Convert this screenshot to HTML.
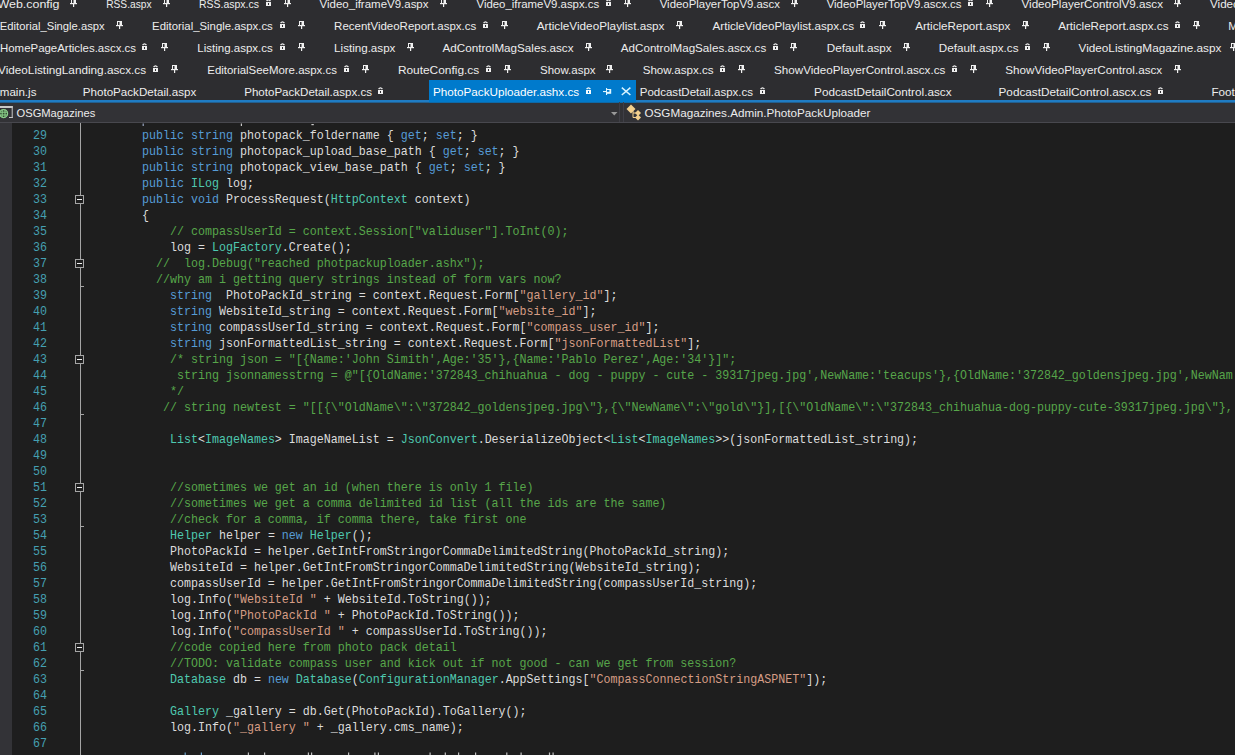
<!DOCTYPE html>
<html><head><meta charset="utf-8">
<style>
html,body{margin:0;padding:0;width:1235px;height:755px;overflow:hidden;background:#2d2d30;}
svg{display:block;}
.tabs text, .nav text{font-family:"Liberation Sans",sans-serif;font-size:11.5px;}
.code text{font-family:"Liberation Mono",monospace;font-size:11.667px;fill:#dcdcdc;}
.code .k{fill:#569cd6;}
.code .t{fill:#4ec9b0;}
.code .s{fill:#d69d85;}
.code .c{fill:#57a64a;}
.code .ln{fill:#45a0b2;}
</style></head>
<body>
<svg width="1235" height="755" viewBox="0 0 1235 755">
<rect x="0" y="0" width="1235" height="755" fill="#2d2d30"/>
<g class="tabs">
<text x="-2.5" y="8" textLength="62.0" lengthAdjust="spacingAndGlyphs" fill="#ececec">Web.config</text>
<g transform="translate(70,-1)" fill="#f0f0f0"><rect x="1" y="0" width="5" height="1"/><rect x="1" y="0" width="1" height="4"/><rect x="3.5" y="0" width="2.5" height="4"/><rect x="0" y="4" width="7" height="1.2"/><rect x="3" y="5" width="1.2" height="3"/></g>
<text x="106.2" y="8" textLength="45.4" lengthAdjust="spacingAndGlyphs" fill="#ececec">RSS.aspx</text>
<g transform="translate(163,-1)" fill="#f0f0f0"><rect x="1" y="0" width="5" height="1"/><rect x="1" y="0" width="1" height="4"/><rect x="3.5" y="0" width="2.5" height="4"/><rect x="0" y="4" width="7" height="1.2"/><rect x="3" y="5" width="1.2" height="3"/></g>
<text x="199.0" y="8" textLength="60.0" lengthAdjust="spacingAndGlyphs" fill="#ececec">RSS.aspx.cs</text>
<g transform="translate(266,-1)"><path d="M0.6 2.2 Q2.5 -0.4 4.4 2.2" stroke="#f0f0f0" stroke-width="1.3" fill="none"/><rect x="0" y="3" width="5" height="4" fill="#f0f0f0"/><rect x="2" y="4" width="1" height="2" fill="#2d2d30"/></g>
<g transform="translate(284,-1)" fill="#f0f0f0"><rect x="1" y="0" width="5" height="1"/><rect x="1" y="0" width="1" height="4"/><rect x="3.5" y="0" width="2.5" height="4"/><rect x="0" y="4" width="7" height="1.2"/><rect x="3" y="5" width="1.2" height="3"/></g>
<text x="319.6" y="8" textLength="108.9" lengthAdjust="spacingAndGlyphs" fill="#ececec">Video_iframeV9.aspx</text>
<g transform="translate(440,-1)" fill="#f0f0f0"><rect x="1" y="0" width="5" height="1"/><rect x="1" y="0" width="1" height="4"/><rect x="3.5" y="0" width="2.5" height="4"/><rect x="0" y="4" width="7" height="1.2"/><rect x="3" y="5" width="1.2" height="3"/></g>
<text x="476.5" y="8" textLength="122.7" lengthAdjust="spacingAndGlyphs" fill="#ececec">Video_iframeV9.aspx.cs</text>
<g transform="translate(606,-1)"><path d="M0.6 2.2 Q2.5 -0.4 4.4 2.2" stroke="#f0f0f0" stroke-width="1.3" fill="none"/><rect x="0" y="3" width="5" height="4" fill="#f0f0f0"/><rect x="2" y="4" width="1" height="2" fill="#2d2d30"/></g>
<g transform="translate(624,-1)" fill="#f0f0f0"><rect x="1" y="0" width="5" height="1"/><rect x="1" y="0" width="1" height="4"/><rect x="3.5" y="0" width="2.5" height="4"/><rect x="0" y="4" width="7" height="1.2"/><rect x="3" y="5" width="1.2" height="3"/></g>
<text x="659.7" y="8" textLength="120.3" lengthAdjust="spacingAndGlyphs" fill="#ececec">VideoPlayerTopV9.ascx</text>
<g transform="translate(791,-1)" fill="#f0f0f0"><rect x="1" y="0" width="5" height="1"/><rect x="1" y="0" width="1" height="4"/><rect x="3.5" y="0" width="2.5" height="4"/><rect x="0" y="4" width="7" height="1.2"/><rect x="3" y="5" width="1.2" height="3"/></g>
<text x="826.7" y="8" textLength="134.8" lengthAdjust="spacingAndGlyphs" fill="#ececec">VideoPlayerTopV9.ascx.cs</text>
<g transform="translate(968,-1)"><path d="M0.6 2.2 Q2.5 -0.4 4.4 2.2" stroke="#f0f0f0" stroke-width="1.3" fill="none"/><rect x="0" y="3" width="5" height="4" fill="#f0f0f0"/><rect x="2" y="4" width="1" height="2" fill="#2d2d30"/></g>
<g transform="translate(986,-1)" fill="#f0f0f0"><rect x="1" y="0" width="5" height="1"/><rect x="1" y="0" width="1" height="4"/><rect x="3.5" y="0" width="2.5" height="4"/><rect x="0" y="4" width="7" height="1.2"/><rect x="3" y="5" width="1.2" height="3"/></g>
<text x="1021.5" y="8" textLength="141.5" lengthAdjust="spacingAndGlyphs" fill="#ececec">VideoPlayerControlV9.ascx</text>
<g transform="translate(1174,-1)" fill="#f0f0f0"><rect x="1" y="0" width="5" height="1"/><rect x="1" y="0" width="1" height="4"/><rect x="3.5" y="0" width="2.5" height="4"/><rect x="0" y="4" width="7" height="1.2"/><rect x="3" y="5" width="1.2" height="3"/></g>
<text x="1210.0" y="8" textLength="156.3" lengthAdjust="spacingAndGlyphs" fill="#ececec">VideoPlayerControlV9.ascx.cs</text>
<text x="-0.2" y="30" textLength="104.9" lengthAdjust="spacingAndGlyphs" fill="#ececec">Editorial_Single.aspx</text>
<g transform="translate(116,21)" fill="#f0f0f0"><rect x="1" y="0" width="5" height="1"/><rect x="1" y="0" width="1" height="4"/><rect x="3.5" y="0" width="2.5" height="4"/><rect x="0" y="4" width="7" height="1.2"/><rect x="3" y="5" width="1.2" height="3"/></g>
<text x="152.1" y="30" textLength="120.7" lengthAdjust="spacingAndGlyphs" fill="#ececec">Editorial_Single.aspx.cs</text>
<g transform="translate(280,21)"><path d="M0.6 2.2 Q2.5 -0.4 4.4 2.2" stroke="#f0f0f0" stroke-width="1.3" fill="none"/><rect x="0" y="3" width="5" height="4" fill="#f0f0f0"/><rect x="2" y="4" width="1" height="2" fill="#2d2d30"/></g>
<g transform="translate(298,21)" fill="#f0f0f0"><rect x="1" y="0" width="5" height="1"/><rect x="1" y="0" width="1" height="4"/><rect x="3.5" y="0" width="2.5" height="4"/><rect x="0" y="4" width="7" height="1.2"/><rect x="3" y="5" width="1.2" height="3"/></g>
<text x="334.1" y="30" textLength="142.1" lengthAdjust="spacingAndGlyphs" fill="#ececec">RecentVideoReport.aspx.cs</text>
<g transform="translate(483,21)"><path d="M0.6 2.2 Q2.5 -0.4 4.4 2.2" stroke="#f0f0f0" stroke-width="1.3" fill="none"/><rect x="0" y="3" width="5" height="4" fill="#f0f0f0"/><rect x="2" y="4" width="1" height="2" fill="#2d2d30"/></g>
<g transform="translate(501,21)" fill="#f0f0f0"><rect x="1" y="0" width="5" height="1"/><rect x="1" y="0" width="1" height="4"/><rect x="3.5" y="0" width="2.5" height="4"/><rect x="0" y="4" width="7" height="1.2"/><rect x="3" y="5" width="1.2" height="3"/></g>
<text x="536.7" y="30" textLength="127.8" lengthAdjust="spacingAndGlyphs" fill="#ececec">ArticleVideoPlaylist.aspx</text>
<g transform="translate(676,21)" fill="#f0f0f0"><rect x="1" y="0" width="5" height="1"/><rect x="1" y="0" width="1" height="4"/><rect x="3.5" y="0" width="2.5" height="4"/><rect x="0" y="4" width="7" height="1.2"/><rect x="3" y="5" width="1.2" height="3"/></g>
<text x="712.5" y="30" textLength="141.5" lengthAdjust="spacingAndGlyphs" fill="#ececec">ArticleVideoPlaylist.aspx.cs</text>
<g transform="translate(860,21)"><path d="M0.6 2.2 Q2.5 -0.4 4.4 2.2" stroke="#f0f0f0" stroke-width="1.3" fill="none"/><rect x="0" y="3" width="5" height="4" fill="#f0f0f0"/><rect x="2" y="4" width="1" height="2" fill="#2d2d30"/></g>
<g transform="translate(879,21)" fill="#f0f0f0"><rect x="1" y="0" width="5" height="1"/><rect x="1" y="0" width="1" height="4"/><rect x="3.5" y="0" width="2.5" height="4"/><rect x="0" y="4" width="7" height="1.2"/><rect x="3" y="5" width="1.2" height="3"/></g>
<text x="915.2" y="30" textLength="95.1" lengthAdjust="spacingAndGlyphs" fill="#ececec">ArticleReport.aspx</text>
<g transform="translate(1022,21)" fill="#f0f0f0"><rect x="1" y="0" width="5" height="1"/><rect x="1" y="0" width="1" height="4"/><rect x="3.5" y="0" width="2.5" height="4"/><rect x="0" y="4" width="7" height="1.2"/><rect x="3" y="5" width="1.2" height="3"/></g>
<text x="1058.2" y="30" textLength="110.3" lengthAdjust="spacingAndGlyphs" fill="#ececec">ArticleReport.aspx.cs</text>
<g transform="translate(1175,21)"><path d="M0.6 2.2 Q2.5 -0.4 4.4 2.2" stroke="#f0f0f0" stroke-width="1.3" fill="none"/><rect x="0" y="3" width="5" height="4" fill="#f0f0f0"/><rect x="2" y="4" width="1" height="2" fill="#2d2d30"/></g>
<g transform="translate(1193,21)" fill="#f0f0f0"><rect x="1" y="0" width="5" height="1"/><rect x="1" y="0" width="1" height="4"/><rect x="3.5" y="0" width="2.5" height="4"/><rect x="0" y="4" width="7" height="1.2"/><rect x="3" y="5" width="1.2" height="3"/></g>
<text x="1228.2" y="30" textLength="111.9" lengthAdjust="spacingAndGlyphs" fill="#ececec">MagazineListing.aspx</text>
<text x="0.0" y="52" textLength="136.0" lengthAdjust="spacingAndGlyphs" fill="#ececec">HomePageArticles.ascx.cs</text>
<g transform="translate(142,43)"><path d="M0.6 2.2 Q2.5 -0.4 4.4 2.2" stroke="#f0f0f0" stroke-width="1.3" fill="none"/><rect x="0" y="3" width="5" height="4" fill="#f0f0f0"/><rect x="2" y="4" width="1" height="2" fill="#2d2d30"/></g>
<g transform="translate(161,43)" fill="#f0f0f0"><rect x="1" y="0" width="5" height="1"/><rect x="1" y="0" width="1" height="4"/><rect x="3.5" y="0" width="2.5" height="4"/><rect x="0" y="4" width="7" height="1.2"/><rect x="3" y="5" width="1.2" height="3"/></g>
<text x="197.3" y="52" textLength="75.5" lengthAdjust="spacingAndGlyphs" fill="#ececec">Listing.aspx.cs</text>
<g transform="translate(280,43)"><path d="M0.6 2.2 Q2.5 -0.4 4.4 2.2" stroke="#f0f0f0" stroke-width="1.3" fill="none"/><rect x="0" y="3" width="5" height="4" fill="#f0f0f0"/><rect x="2" y="4" width="1" height="2" fill="#2d2d30"/></g>
<g transform="translate(298,43)" fill="#f0f0f0"><rect x="1" y="0" width="5" height="1"/><rect x="1" y="0" width="1" height="4"/><rect x="3.5" y="0" width="2.5" height="4"/><rect x="0" y="4" width="7" height="1.2"/><rect x="3" y="5" width="1.2" height="3"/></g>
<text x="334.1" y="52" textLength="61.3" lengthAdjust="spacingAndGlyphs" fill="#ececec">Listing.aspx</text>
<g transform="translate(407,43)" fill="#f0f0f0"><rect x="1" y="0" width="5" height="1"/><rect x="1" y="0" width="1" height="4"/><rect x="3.5" y="0" width="2.5" height="4"/><rect x="0" y="4" width="7" height="1.2"/><rect x="3" y="5" width="1.2" height="3"/></g>
<text x="442.5" y="52" textLength="131.0" lengthAdjust="spacingAndGlyphs" fill="#ececec">AdControlMagSales.ascx</text>
<g transform="translate(585,43)" fill="#f0f0f0"><rect x="1" y="0" width="5" height="1"/><rect x="1" y="0" width="1" height="4"/><rect x="3.5" y="0" width="2.5" height="4"/><rect x="0" y="4" width="7" height="1.2"/><rect x="3" y="5" width="1.2" height="3"/></g>
<text x="620.8" y="52" textLength="145.4" lengthAdjust="spacingAndGlyphs" fill="#ececec">AdControlMagSales.ascx.cs</text>
<g transform="translate(773,43)"><path d="M0.6 2.2 Q2.5 -0.4 4.4 2.2" stroke="#f0f0f0" stroke-width="1.3" fill="none"/><rect x="0" y="3" width="5" height="4" fill="#f0f0f0"/><rect x="2" y="4" width="1" height="2" fill="#2d2d30"/></g>
<g transform="translate(790,43)" fill="#f0f0f0"><rect x="1" y="0" width="5" height="1"/><rect x="1" y="0" width="1" height="4"/><rect x="3.5" y="0" width="2.5" height="4"/><rect x="0" y="4" width="7" height="1.2"/><rect x="3" y="5" width="1.2" height="3"/></g>
<text x="826.7" y="52" textLength="65.0" lengthAdjust="spacingAndGlyphs" fill="#ececec">Default.aspx</text>
<g transform="translate(903,43)" fill="#f0f0f0"><rect x="1" y="0" width="5" height="1"/><rect x="1" y="0" width="1" height="4"/><rect x="3.5" y="0" width="2.5" height="4"/><rect x="0" y="4" width="7" height="1.2"/><rect x="3" y="5" width="1.2" height="3"/></g>
<text x="938.8" y="52" textLength="79.7" lengthAdjust="spacingAndGlyphs" fill="#ececec">Default.aspx.cs</text>
<g transform="translate(1025,43)"><path d="M0.6 2.2 Q2.5 -0.4 4.4 2.2" stroke="#f0f0f0" stroke-width="1.3" fill="none"/><rect x="0" y="3" width="5" height="4" fill="#f0f0f0"/><rect x="2" y="4" width="1" height="2" fill="#2d2d30"/></g>
<g transform="translate(1043,43)" fill="#f0f0f0"><rect x="1" y="0" width="5" height="1"/><rect x="1" y="0" width="1" height="4"/><rect x="3.5" y="0" width="2.5" height="4"/><rect x="0" y="4" width="7" height="1.2"/><rect x="3" y="5" width="1.2" height="3"/></g>
<text x="1078.5" y="52" textLength="142.9" lengthAdjust="spacingAndGlyphs" fill="#ececec">VideoListingMagazine.aspx</text>
<g transform="translate(1230,43)" fill="#f0f0f0"><rect x="1" y="0" width="5" height="1"/><rect x="1" y="0" width="1" height="4"/><rect x="3.5" y="0" width="2.5" height="4"/><rect x="0" y="4" width="7" height="1.2"/><rect x="3" y="5" width="1.2" height="3"/></g>
<text x="-2.0" y="74" textLength="148.1" lengthAdjust="spacingAndGlyphs" fill="#ececec">VideoListingLanding.ascx.cs</text>
<g transform="translate(153,65)"><path d="M0.6 2.2 Q2.5 -0.4 4.4 2.2" stroke="#f0f0f0" stroke-width="1.3" fill="none"/><rect x="0" y="3" width="5" height="4" fill="#f0f0f0"/><rect x="2" y="4" width="1" height="2" fill="#2d2d30"/></g>
<g transform="translate(171,65)" fill="#f0f0f0"><rect x="1" y="0" width="5" height="1"/><rect x="1" y="0" width="1" height="4"/><rect x="3.5" y="0" width="2.5" height="4"/><rect x="0" y="4" width="7" height="1.2"/><rect x="3" y="5" width="1.2" height="3"/></g>
<text x="207.3" y="74" textLength="129.6" lengthAdjust="spacingAndGlyphs" fill="#ececec">EditorialSeeMore.aspx.cs</text>
<g transform="translate(344,65)"><path d="M0.6 2.2 Q2.5 -0.4 4.4 2.2" stroke="#f0f0f0" stroke-width="1.3" fill="none"/><rect x="0" y="3" width="5" height="4" fill="#f0f0f0"/><rect x="2" y="4" width="1" height="2" fill="#2d2d30"/></g>
<g transform="translate(362,65)" fill="#f0f0f0"><rect x="1" y="0" width="5" height="1"/><rect x="1" y="0" width="1" height="4"/><rect x="3.5" y="0" width="2.5" height="4"/><rect x="0" y="4" width="7" height="1.2"/><rect x="3" y="5" width="1.2" height="3"/></g>
<text x="397.9" y="74" textLength="81.3" lengthAdjust="spacingAndGlyphs" fill="#ececec">RouteConfig.cs</text>
<g transform="translate(486,65)"><path d="M0.6 2.2 Q2.5 -0.4 4.4 2.2" stroke="#f0f0f0" stroke-width="1.3" fill="none"/><rect x="0" y="3" width="5" height="4" fill="#f0f0f0"/><rect x="2" y="4" width="1" height="2" fill="#2d2d30"/></g>
<g transform="translate(504,65)" fill="#f0f0f0"><rect x="1" y="0" width="5" height="1"/><rect x="1" y="0" width="1" height="4"/><rect x="3.5" y="0" width="2.5" height="4"/><rect x="0" y="4" width="7" height="1.2"/><rect x="3" y="5" width="1.2" height="3"/></g>
<text x="540.0" y="74" textLength="55.5" lengthAdjust="spacingAndGlyphs" fill="#ececec">Show.aspx</text>
<g transform="translate(606,65)" fill="#f0f0f0"><rect x="1" y="0" width="5" height="1"/><rect x="1" y="0" width="1" height="4"/><rect x="3.5" y="0" width="2.5" height="4"/><rect x="0" y="4" width="7" height="1.2"/><rect x="3" y="5" width="1.2" height="3"/></g>
<text x="642.7" y="74" textLength="70.8" lengthAdjust="spacingAndGlyphs" fill="#ececec">Show.aspx.cs</text>
<g transform="translate(720,65)"><path d="M0.6 2.2 Q2.5 -0.4 4.4 2.2" stroke="#f0f0f0" stroke-width="1.3" fill="none"/><rect x="0" y="3" width="5" height="4" fill="#f0f0f0"/><rect x="2" y="4" width="1" height="2" fill="#2d2d30"/></g>
<g transform="translate(738,65)" fill="#f0f0f0"><rect x="1" y="0" width="5" height="1"/><rect x="1" y="0" width="1" height="4"/><rect x="3.5" y="0" width="2.5" height="4"/><rect x="0" y="4" width="7" height="1.2"/><rect x="3" y="5" width="1.2" height="3"/></g>
<text x="774.0" y="74" textLength="171.3" lengthAdjust="spacingAndGlyphs" fill="#ececec">ShowVideoPlayerControl.ascx.cs</text>
<g transform="translate(952,65)"><path d="M0.6 2.2 Q2.5 -0.4 4.4 2.2" stroke="#f0f0f0" stroke-width="1.3" fill="none"/><rect x="0" y="3" width="5" height="4" fill="#f0f0f0"/><rect x="2" y="4" width="1" height="2" fill="#2d2d30"/></g>
<g transform="translate(970,65)" fill="#f0f0f0"><rect x="1" y="0" width="5" height="1"/><rect x="1" y="0" width="1" height="4"/><rect x="3.5" y="0" width="2.5" height="4"/><rect x="0" y="4" width="7" height="1.2"/><rect x="3" y="5" width="1.2" height="3"/></g>
<text x="1005.3" y="74" textLength="156.9" lengthAdjust="spacingAndGlyphs" fill="#ececec">ShowVideoPlayerControl.ascx</text>
<g transform="translate(1174,65)" fill="#f0f0f0"><rect x="1" y="0" width="5" height="1"/><rect x="1" y="0" width="1" height="4"/><rect x="3.5" y="0" width="2.5" height="4"/><rect x="0" y="4" width="7" height="1.2"/><rect x="3" y="5" width="1.2" height="3"/></g>
<text x="-0.2" y="96" textLength="36.6" lengthAdjust="spacingAndGlyphs" fill="#ececec">main.js</text>
<text x="82.8" y="96" textLength="113.5" lengthAdjust="spacingAndGlyphs" fill="#ececec">PhotoPackDetail.aspx</text>
<text x="244.2" y="96" textLength="127.8" lengthAdjust="spacingAndGlyphs" fill="#ececec">PhotoPackDetail.aspx.cs</text>
<g transform="translate(378,87)"><path d="M0.6 2.2 Q2.5 -0.4 4.4 2.2" stroke="#f0f0f0" stroke-width="1.3" fill="none"/><rect x="0" y="3" width="5" height="4" fill="#f0f0f0"/><rect x="2" y="4" width="1" height="2" fill="#2d2d30"/></g>
<text x="639.7" y="96" textLength="113.4" lengthAdjust="spacingAndGlyphs" fill="#ececec">PodcastDetail.aspx.cs</text>
<g transform="translate(760,87)"><path d="M0.6 2.2 Q2.5 -0.4 4.4 2.2" stroke="#f0f0f0" stroke-width="1.3" fill="none"/><rect x="0" y="3" width="5" height="4" fill="#f0f0f0"/><rect x="2" y="4" width="1" height="2" fill="#2d2d30"/></g>
<text x="814.1" y="96" textLength="137.4" lengthAdjust="spacingAndGlyphs" fill="#ececec">PodcastDetailControl.ascx</text>
<text x="998.5" y="96" textLength="152.9" lengthAdjust="spacingAndGlyphs" fill="#ececec">PodcastDetailControl.ascx.cs</text>
<g transform="translate(1158,87)"><path d="M0.6 2.2 Q2.5 -0.4 4.4 2.2" stroke="#f0f0f0" stroke-width="1.3" fill="none"/><rect x="0" y="3" width="5" height="4" fill="#f0f0f0"/><rect x="2" y="4" width="1" height="2" fill="#2d2d30"/></g>
<text x="1211.4" y="96" textLength="60.2" lengthAdjust="spacingAndGlyphs" fill="#ececec">Footer.ascx</text>
<rect x="0" y="100" width="1235" height="2.8" fill="#1f7cc4"/>
<rect x="429" y="80" width="207" height="22.8" fill="#007acc"/>
<text x="433.0" y="96" textLength="146.1" lengthAdjust="spacingAndGlyphs" fill="#ffffff">PhotoPackUploader.ashx.cs</text>
<g transform="translate(586,87)"><path d="M0.6 2.2 Q2.5 -0.4 4.4 2.2" stroke="#f4fbff" stroke-width="1.3" fill="none"/><rect x="0" y="3" width="5" height="4" fill="#f4fbff"/><rect x="2" y="4" width="1" height="2" fill="#007acc"/></g>
<g transform="translate(603,88)" fill="#e0f6ff"><rect x="0" y="3" width="3" height="1.1"/><rect x="3" y="0" width="1.1" height="7"/><rect x="4" y="1" width="4.2" height="4.8"/><rect x="4" y="2" width="2.4" height="1.8" fill="#007acc"/></g>
<path d="M621.8 87.6 L630.4 95 M630.4 87.6 L621.8 95" stroke="#d8f4ff" stroke-width="1.5"/>
</g>
<g class="nav">

<rect x="0" y="102.8" width="1235" height="19.2" fill="#323236"/>
<rect x="0" y="122" width="1235" height="1.5" fill="#48484e"/>
<g>
 <rect x="-2" y="106" width="14.7" height="2" fill="#c8c8c8"/>
 <rect x="11.7" y="106" width="1" height="12" fill="#c8c8c8"/>
 <rect x="9" y="117" width="3.7" height="1" fill="#c8c8c8"/>
 <circle cx="3.6" cy="113.6" r="4" fill="#2f4a2f" stroke="#8ccf8c" stroke-width="1.2"/>
 <path d="M-0.5 112.2 H7.7 M-0.5 115 H7.7 M2.2 109.5 V117.7 M5 109.5 V117.7" stroke="#8ccf8c" stroke-width="1"/>
</g>
<path d="M611 112 L617.5 112 L614.25 115.5 Z" fill="#999999"/>
<rect x="619" y="102" width="1" height="20" fill="#3f3f46"/>
<rect x="623" y="102" width="1" height="20" fill="#3f3f46"/>
<g fill="#f2cf8c">
 <path d="M631 104.5 L635.5 109 L631 113.5 L626.5 109 Z"/>
 <path d="M638 110 L641 113 L638 116 L635 113 Z"/>
 <path d="M638 114.5 L641 117.5 L638 120.5 L635 117.5 Z"/>
</g>
<path d="M633 111 V117.5 H636 M633 113 H636" stroke="#f2cf8c" stroke-width="1" fill="none"/>
<text x="16.5" y="117" textLength="78.8" lengthAdjust="spacingAndGlyphs" fill="#ececec">OSGMagazines</text>
<text x="644.5" y="117" textLength="225.9" lengthAdjust="spacingAndGlyphs" fill="#ececec">OSGMagazines.Admin.PhotoPackUploader</text>
</g>
<rect x="0" y="123" width="1235" height="632" fill="#1e1e1e"/>
<rect x="0" y="123" width="12" height="632" fill="#333337"/>
<svg x="0" y="123" width="1235" height="632" viewBox="0 123 1235 632">
<g class="code">
<text transform="translate(0,139) scale(1,1.08) translate(0,-139)" x="142.0" y="139" xml:space="preserve"><tspan class="k">public</tspan><tspan class="p"> </tspan><tspan class="k">string</tspan><tspan class="p"> photopack_foldername { </tspan><tspan class="k">get</tspan><tspan class="p">; </tspan><tspan class="k">set</tspan><tspan class="p">; }</tspan></text>
<text class="ln" transform="translate(0,139) scale(1,1.08) translate(0,-139)" x="33.0" y="139">29</text>
<text transform="translate(0,155) scale(1,1.08) translate(0,-155)" x="142.0" y="155" xml:space="preserve"><tspan class="k">public</tspan><tspan class="p"> </tspan><tspan class="k">string</tspan><tspan class="p"> photopack_upload_base_path { </tspan><tspan class="k">get</tspan><tspan class="p">; </tspan><tspan class="k">set</tspan><tspan class="p">; }</tspan></text>
<text class="ln" transform="translate(0,155) scale(1,1.08) translate(0,-155)" x="33.0" y="155">30</text>
<text transform="translate(0,171) scale(1,1.08) translate(0,-171)" x="142.0" y="171" xml:space="preserve"><tspan class="k">public</tspan><tspan class="p"> </tspan><tspan class="k">string</tspan><tspan class="p"> photopack_view_base_path { </tspan><tspan class="k">get</tspan><tspan class="p">; </tspan><tspan class="k">set</tspan><tspan class="p">; }</tspan></text>
<text class="ln" transform="translate(0,171) scale(1,1.08) translate(0,-171)" x="33.0" y="171">31</text>
<text transform="translate(0,187) scale(1,1.08) translate(0,-187)" x="142.0" y="187" xml:space="preserve"><tspan class="k">public</tspan><tspan class="p"> </tspan><tspan class="t">ILog</tspan><tspan class="p"> log;</tspan></text>
<text class="ln" transform="translate(0,187) scale(1,1.08) translate(0,-187)" x="33.0" y="187">32</text>
<text transform="translate(0,203) scale(1,1.08) translate(0,-203)" x="142.0" y="203" xml:space="preserve"><tspan class="k">public</tspan><tspan class="p"> </tspan><tspan class="k">void</tspan><tspan class="p"> ProcessRequest(</tspan><tspan class="t">HttpContext</tspan><tspan class="p"> context)</tspan></text>
<text class="ln" transform="translate(0,203) scale(1,1.08) translate(0,-203)" x="33.0" y="203">33</text>
<text transform="translate(0,219) scale(1,1.08) translate(0,-219)" x="142.0" y="219" xml:space="preserve"><tspan class="p">{</tspan></text>
<text class="ln" transform="translate(0,219) scale(1,1.08) translate(0,-219)" x="33.0" y="219">34</text>
<text transform="translate(0,235) scale(1,1.08) translate(0,-235)" x="170.0" y="235" xml:space="preserve"><tspan class="c">// compassUserId = context.Session[&quot;validuser&quot;].ToInt(0);</tspan></text>
<text class="ln" transform="translate(0,235) scale(1,1.08) translate(0,-235)" x="33.0" y="235">35</text>
<text transform="translate(0,251) scale(1,1.08) translate(0,-251)" x="170.0" y="251" xml:space="preserve"><tspan class="p">log = </tspan><tspan class="t">LogFactory</tspan><tspan class="p">.Create();</tspan></text>
<text class="ln" transform="translate(0,251) scale(1,1.08) translate(0,-251)" x="33.0" y="251">36</text>
<text transform="translate(0,267) scale(1,1.08) translate(0,-267)" x="156.0" y="267" xml:space="preserve"><tspan class="c">//  log.Debug(&quot;reached photpackuploader.ashx&quot;);</tspan></text>
<text class="ln" transform="translate(0,267) scale(1,1.08) translate(0,-267)" x="33.0" y="267">37</text>
<text transform="translate(0,283) scale(1,1.08) translate(0,-283)" x="156.0" y="283" xml:space="preserve"><tspan class="c">//why am i getting query strings instead of form vars now?</tspan></text>
<text class="ln" transform="translate(0,283) scale(1,1.08) translate(0,-283)" x="33.0" y="283">38</text>
<text transform="translate(0,299) scale(1,1.08) translate(0,-299)" x="170.0" y="299" xml:space="preserve"><tspan class="k">string</tspan><tspan class="p">  PhotoPackId_string = context.Request.Form[</tspan><tspan class="s">&quot;gallery_id&quot;</tspan><tspan class="p">];</tspan></text>
<text class="ln" transform="translate(0,299) scale(1,1.08) translate(0,-299)" x="33.0" y="299">39</text>
<text transform="translate(0,315) scale(1,1.08) translate(0,-315)" x="170.0" y="315" xml:space="preserve"><tspan class="k">string</tspan><tspan class="p"> WebsiteId_string = context.Request.Form[</tspan><tspan class="s">&quot;website_id&quot;</tspan><tspan class="p">];</tspan></text>
<text class="ln" transform="translate(0,315) scale(1,1.08) translate(0,-315)" x="33.0" y="315">40</text>
<text transform="translate(0,331) scale(1,1.08) translate(0,-331)" x="170.0" y="331" xml:space="preserve"><tspan class="k">string</tspan><tspan class="p"> compassUserId_string = context.Request.Form[</tspan><tspan class="s">&quot;compass_user_id&quot;</tspan><tspan class="p">];</tspan></text>
<text class="ln" transform="translate(0,331) scale(1,1.08) translate(0,-331)" x="33.0" y="331">41</text>
<text transform="translate(0,347) scale(1,1.08) translate(0,-347)" x="170.0" y="347" xml:space="preserve"><tspan class="k">string</tspan><tspan class="p"> jsonFormattedList_string = context.Request.Form[</tspan><tspan class="s">&quot;jsonFormattedList&quot;</tspan><tspan class="p">];</tspan></text>
<text class="ln" transform="translate(0,347) scale(1,1.08) translate(0,-347)" x="33.0" y="347">42</text>
<text transform="translate(0,363) scale(1,1.08) translate(0,-363)" x="170.0" y="363" xml:space="preserve"><tspan class="c">/* string json = &quot;[{Name:&#x27;John Simith&#x27;,Age:&#x27;35&#x27;},{Name:&#x27;Pablo Perez&#x27;,Age:&#x27;34&#x27;}]&quot;;</tspan></text>
<text class="ln" transform="translate(0,363) scale(1,1.08) translate(0,-363)" x="33.0" y="363">43</text>
<text transform="translate(0,379) scale(1,1.08) translate(0,-379)" x="177.0" y="379" xml:space="preserve"><tspan class="c">string jsonnamesstrng = @&quot;[{OldName:&#x27;372843_chihuahua - dog - puppy - cute - 39317jpeg.jpg&#x27;,NewName:&#x27;teacups&#x27;},{OldName:&#x27;372842_goldensjpeg.jpg&#x27;,NewNam</tspan></text>
<text class="ln" transform="translate(0,379) scale(1,1.08) translate(0,-379)" x="33.0" y="379">44</text>
<text transform="translate(0,395) scale(1,1.08) translate(0,-395)" x="170.0" y="395" xml:space="preserve"><tspan class="c">*/</tspan></text>
<text class="ln" transform="translate(0,395) scale(1,1.08) translate(0,-395)" x="33.0" y="395">45</text>
<text transform="translate(0,411) scale(1,1.08) translate(0,-411)" x="163.0" y="411" xml:space="preserve"><tspan class="c">// string newtest = &quot;[[{\&quot;OldName\&quot;:\&quot;372842_goldensjpeg.jpg\&quot;},{\&quot;NewName\&quot;:\&quot;gold\&quot;}],[{\&quot;OldName\&quot;:\&quot;372843_chihuahua-dog-puppy-cute-39317jpeg.jpg\&quot;},</tspan></text>
<text class="ln" transform="translate(0,411) scale(1,1.08) translate(0,-411)" x="33.0" y="411">46</text>
<text class="ln" transform="translate(0,427) scale(1,1.08) translate(0,-427)" x="33.0" y="427">47</text>
<text transform="translate(0,443) scale(1,1.08) translate(0,-443)" x="170.0" y="443" xml:space="preserve"><tspan class="t">List</tspan><tspan class="p">&lt;</tspan><tspan class="t">ImageNames</tspan><tspan class="p">&gt; ImageNameList = </tspan><tspan class="t">JsonConvert</tspan><tspan class="p">.DeserializeObject&lt;</tspan><tspan class="t">List</tspan><tspan class="p">&lt;</tspan><tspan class="t">ImageNames</tspan><tspan class="p">&gt;&gt;(jsonFormattedList_string);</tspan></text>
<text class="ln" transform="translate(0,443) scale(1,1.08) translate(0,-443)" x="33.0" y="443">48</text>
<text class="ln" transform="translate(0,459) scale(1,1.08) translate(0,-459)" x="33.0" y="459">49</text>
<text class="ln" transform="translate(0,475) scale(1,1.08) translate(0,-475)" x="33.0" y="475">50</text>
<text transform="translate(0,491) scale(1,1.08) translate(0,-491)" x="170.0" y="491" xml:space="preserve"><tspan class="c">//sometimes we get an id (when there is only 1 file)</tspan></text>
<text class="ln" transform="translate(0,491) scale(1,1.08) translate(0,-491)" x="33.0" y="491">51</text>
<text transform="translate(0,507) scale(1,1.08) translate(0,-507)" x="170.0" y="507" xml:space="preserve"><tspan class="c">//sometimes we get a comma delimited id list (all the ids are the same)</tspan></text>
<text class="ln" transform="translate(0,507) scale(1,1.08) translate(0,-507)" x="33.0" y="507">52</text>
<text transform="translate(0,523) scale(1,1.08) translate(0,-523)" x="170.0" y="523" xml:space="preserve"><tspan class="c">//check for a comma, if comma there, take first one</tspan></text>
<text class="ln" transform="translate(0,523) scale(1,1.08) translate(0,-523)" x="33.0" y="523">53</text>
<text transform="translate(0,539) scale(1,1.08) translate(0,-539)" x="170.0" y="539" xml:space="preserve"><tspan class="t">Helper</tspan><tspan class="p"> helper = </tspan><tspan class="k">new</tspan><tspan class="p"> </tspan><tspan class="t">Helper</tspan><tspan class="p">();</tspan></text>
<text class="ln" transform="translate(0,539) scale(1,1.08) translate(0,-539)" x="33.0" y="539">54</text>
<text transform="translate(0,555) scale(1,1.08) translate(0,-555)" x="170.0" y="555" xml:space="preserve"><tspan class="p">PhotoPackId = helper.GetIntFromStringorCommaDelimitedString(PhotoPackId_string);</tspan></text>
<text class="ln" transform="translate(0,555) scale(1,1.08) translate(0,-555)" x="33.0" y="555">55</text>
<text transform="translate(0,571) scale(1,1.08) translate(0,-571)" x="170.0" y="571" xml:space="preserve"><tspan class="p">WebsiteId = helper.GetIntFromStringorCommaDelimitedString(WebsiteId_string);</tspan></text>
<text class="ln" transform="translate(0,571) scale(1,1.08) translate(0,-571)" x="33.0" y="571">56</text>
<text transform="translate(0,587) scale(1,1.08) translate(0,-587)" x="170.0" y="587" xml:space="preserve"><tspan class="p">compassUserId = helper.GetIntFromStringorCommaDelimitedString(compassUserId_string);</tspan></text>
<text class="ln" transform="translate(0,587) scale(1,1.08) translate(0,-587)" x="33.0" y="587">57</text>
<text transform="translate(0,603) scale(1,1.08) translate(0,-603)" x="170.0" y="603" xml:space="preserve"><tspan class="p">log.Info(</tspan><tspan class="s">&quot;WebsiteId &quot;</tspan><tspan class="p"> + WebsiteId.ToString());</tspan></text>
<text class="ln" transform="translate(0,603) scale(1,1.08) translate(0,-603)" x="33.0" y="603">58</text>
<text transform="translate(0,619) scale(1,1.08) translate(0,-619)" x="170.0" y="619" xml:space="preserve"><tspan class="p">log.Info(</tspan><tspan class="s">&quot;PhotoPackId &quot;</tspan><tspan class="p"> + PhotoPackId.ToString());</tspan></text>
<text class="ln" transform="translate(0,619) scale(1,1.08) translate(0,-619)" x="33.0" y="619">59</text>
<text transform="translate(0,635) scale(1,1.08) translate(0,-635)" x="170.0" y="635" xml:space="preserve"><tspan class="p">log.Info(</tspan><tspan class="s">&quot;compassUserId &quot;</tspan><tspan class="p"> + compassUserId.ToString());</tspan></text>
<text class="ln" transform="translate(0,635) scale(1,1.08) translate(0,-635)" x="33.0" y="635">60</text>
<text transform="translate(0,651) scale(1,1.08) translate(0,-651)" x="170.0" y="651" xml:space="preserve"><tspan class="c">//code copied here from photo pack detail</tspan></text>
<text class="ln" transform="translate(0,651) scale(1,1.08) translate(0,-651)" x="33.0" y="651">61</text>
<text transform="translate(0,667) scale(1,1.08) translate(0,-667)" x="170.0" y="667" xml:space="preserve"><tspan class="c">//TODO: validate compass user and kick out if not good - can we get from session?</tspan></text>
<text class="ln" transform="translate(0,667) scale(1,1.08) translate(0,-667)" x="33.0" y="667">62</text>
<text transform="translate(0,683) scale(1,1.08) translate(0,-683)" x="170.0" y="683" xml:space="preserve"><tspan class="t">Database</tspan><tspan class="p"> db = </tspan><tspan class="k">new</tspan><tspan class="p"> </tspan><tspan class="t">Database</tspan><tspan class="p">(</tspan><tspan class="t">ConfigurationManager</tspan><tspan class="p">.AppSettings[</tspan><tspan class="s">&quot;CompassConnectionStringASPNET&quot;</tspan><tspan class="p">]);</tspan></text>
<text class="ln" transform="translate(0,683) scale(1,1.08) translate(0,-683)" x="33.0" y="683">63</text>
<text class="ln" transform="translate(0,699) scale(1,1.08) translate(0,-699)" x="33.0" y="699">64</text>
<text transform="translate(0,715) scale(1,1.08) translate(0,-715)" x="170.0" y="715" xml:space="preserve"><tspan class="t">Gallery</tspan><tspan class="p"> _gallery = db.Get(PhotoPackId).ToGallery();</tspan></text>
<text class="ln" transform="translate(0,715) scale(1,1.08) translate(0,-715)" x="33.0" y="715">65</text>
<text transform="translate(0,731) scale(1,1.08) translate(0,-731)" x="170.0" y="731" xml:space="preserve"><tspan class="p">log.Info(</tspan><tspan class="s">&quot;_gallery &quot;</tspan><tspan class="p"> + _gallery.cms_name);</tspan></text>
<text class="ln" transform="translate(0,731) scale(1,1.08) translate(0,-731)" x="33.0" y="731">66</text>
<text class="ln" transform="translate(0,747) scale(1,1.08) translate(0,-747)" x="33.0" y="747">67</text>
</g>
<rect x="80" y="123" width="1" height="632" fill="#a5a5a5"/>
<rect x="75" y="195" width="9" height="9" fill="#a5a5a5"/><rect x="76" y="196" width="7" height="7" fill="#1e1e1e"/><rect x="77" y="199" width="5" height="1" fill="#f0f0f0"/>
<rect x="75" y="259" width="9" height="9" fill="#a5a5a5"/><rect x="76" y="260" width="7" height="7" fill="#1e1e1e"/><rect x="77" y="263" width="5" height="1" fill="#f0f0f0"/>
<rect x="75" y="355" width="9" height="9" fill="#a5a5a5"/><rect x="76" y="356" width="7" height="7" fill="#1e1e1e"/><rect x="77" y="359" width="5" height="1" fill="#f0f0f0"/>
<rect x="75" y="483" width="9" height="9" fill="#a5a5a5"/><rect x="76" y="484" width="7" height="7" fill="#1e1e1e"/><rect x="77" y="487" width="5" height="1" fill="#f0f0f0"/>
<rect x="75" y="643" width="9" height="9" fill="#a5a5a5"/><rect x="76" y="644" width="7" height="7" fill="#1e1e1e"/><rect x="77" y="647" width="5" height="1" fill="#f0f0f0"/>
<rect x="80" y="286" width="4" height="1" fill="#a5a5a5"/>
<rect x="80" y="414" width="4" height="1" fill="#a5a5a5"/>
<rect x="80" y="526" width="4" height="1" fill="#a5a5a5"/>
<rect x="80" y="670" width="4" height="1" fill="#a5a5a5"/>
<rect x="142.6" y="123.5" width="1.2" height="2.5" fill="#9aa6c0"/>
<rect x="240.8" y="123.5" width="1.2" height="2.5" fill="#c8c8c8"/>
<rect x="311.4" y="124" width="2.4" height="1.2" fill="#c8c8c8"/>
<rect x="184.6" y="752.5" width="1.2" height="2.5" fill="#6aa0c8"/>
<rect x="200.8" y="752.5" width="1.2" height="2.5" fill="#6aa0d0"/>
<rect x="247.8" y="752.5" width="1.2" height="2.5" fill="#c0c0c0"/>
<rect x="264" y="752.5" width="1.2" height="2.5" fill="#c0c0c0"/>
<rect x="307.8" y="752.5" width="1.2" height="2.5" fill="#c0c0c0"/>
<rect x="311" y="752.5" width="1.2" height="2.5" fill="#c0c0c0"/>
<rect x="348" y="752.5" width="1.2" height="2.5" fill="#c0c0c0"/>
<rect x="374.3" y="752.5" width="1.2" height="2.5" fill="#c0c0c0"/>
<rect x="377.8" y="752.5" width="1.2" height="2.5" fill="#c0c0c0"/>
<rect x="429.5" y="752.5" width="1.2" height="2.5" fill="#c0c0c0"/>
<rect x="444.7" y="752.5" width="1.2" height="2.5" fill="#c0c0c0"/>
<rect x="458" y="752.5" width="1.2" height="2.5" fill="#c0c0c0"/>
<rect x="475" y="752.5" width="1.2" height="2.5" fill="#c0c0c0"/>
<rect x="506.2" y="752.5" width="1.2" height="2.5" fill="#c0c0c0"/>
<rect x="520.5" y="752.5" width="1.2" height="2.5" fill="#c0c0c0"/>
<rect x="548.9" y="752.5" width="1.2" height="2.5" fill="#c0c0c0"/>
<rect x="552.5" y="752.5" width="1.2" height="2.5" fill="#c0c0c0"/>
</svg>
</svg>
</body></html>
